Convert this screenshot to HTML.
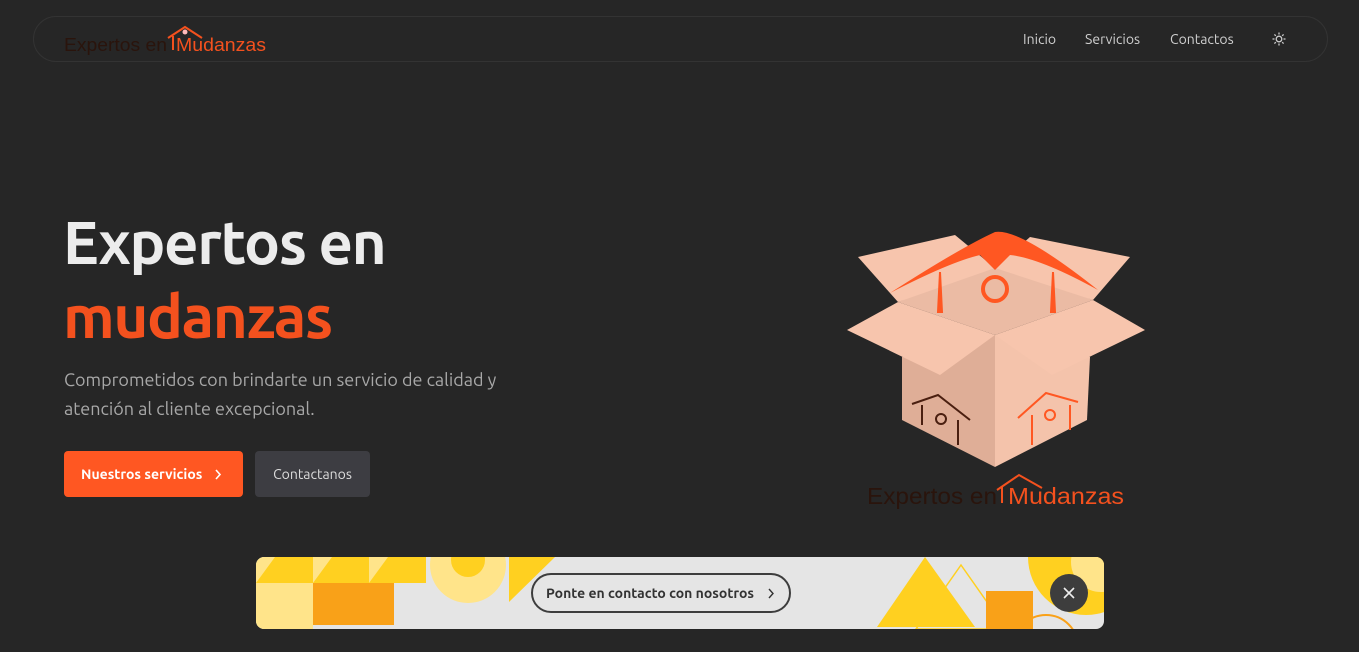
<!DOCTYPE html>
<html><head><meta charset="utf-8"><style>
*{margin:0;padding:0;box-sizing:border-box}
body{width:1359px;height:652px;background:#262626;font-family:"Ubuntu","Liberation Sans","DejaVu Sans",sans-serif;position:relative;overflow:hidden}
.nav{position:absolute;left:33px;top:16px;width:1295px;height:46px;border:1px solid #333;border-radius:23px}
.nav a{position:absolute;top:14px;font-size:14px;color:#cfcfcf;text-decoration:none}
h1{position:absolute;left:63px;top:206px;font-size:60px;font-weight:bold;color:#ececec;line-height:74px;letter-spacing:-1.4px}
h1 span{color:#f4511e}
p{position:absolute;left:64px;top:366px;font-size:18px;line-height:29px;color:#a8a8a8;width:460px}
.b1{position:absolute;left:64px;top:451px;width:179px;height:46px;background:#ff5722;border-radius:4px;color:#fff;font-size:14px;font-weight:bold;line-height:46px;padding-left:17px}
.b2{position:absolute;left:255px;top:451px;width:115px;height:46px;background:#3d3d42;border-radius:4px;color:#ddd;font-size:14px;line-height:46px;text-align:center}
.ban{position:absolute;left:256px;top:557px;width:848px;height:72px;background:#e5e5e5;border-radius:8px;overflow:hidden}
.chev{position:absolute}
</style></head><body>
<div class="nav">
<svg style="position:absolute;left:30px;top:7px" width="240" height="32">
<text x="0" y="27" font-family="Liberation Sans,sans-serif" font-size="18" textLength="103" lengthAdjust="spacingAndGlyphs" fill="#2a140c">Expertos en</text>
<text x="112" y="27" font-family="Liberation Sans,sans-serif" font-size="18" textLength="90" lengthAdjust="spacingAndGlyphs" fill="#f4511e">Mudanzas</text>
<path d="M104 14 L121 3 L138 14" stroke="#f4511e" stroke-width="2" fill="none"/>
<line x1="109" y1="12" x2="109" y2="26" stroke="#f4511e" stroke-width="2"/>
<circle cx="121" cy="8" r="2.5" fill="#fbb"/>
</svg>
<a style="left:989px">Inicio</a><a style="left:1051px">Servicios</a><a style="left:1136px">Contactos</a>
<svg style="position:absolute;left:1238px;top:15px" width="14" height="14" viewBox="0 0 14 14" stroke="#ccc" stroke-width="1.3" fill="none"><circle cx="7" cy="7" r="2.8"/><path d="M7 0.5v2M7 11.5v2M0.5 7h2M11.5 7h2M2.4 2.4l1.4 1.4M10.2 10.2l1.4 1.4M2.4 11.6l1.4-1.4M10.2 3.8l1.4-1.4"/></svg>
</div>
<h1>Expertos en<br><span>mudanzas</span></h1>
<p>Comprometidos con brindarte un servicio de calidad y atención al cliente excepcional.</p>
<div class="b1">Nuestros servicios<svg class="chev" style="left:150px;top:18px" width="8" height="11" viewBox="0 0 8 11"><path d="M2 1l4 4.5L2 10" stroke="#fff" stroke-width="1.6" fill="none"/></svg></div>
<div class="b2">Contactanos</div>
<svg style="position:absolute;left:830px;top:220px" width="330" height="300" viewBox="830 220 330 300">
<polygon points="898,302 995,262 1093,300 995,335" fill="#ebbba4"/>
<polygon points="858,257 955,235 995,268 898,302" fill="#f7c5ad"/>
<polygon points="1030,237 1130,257 1093,300 995,268" fill="#f7c5ad"/>
<polygon points="902,357 995,335 995,467 902,420" fill="#dfae97"/>
<polygon points="995,335 1090,357 1087,420 995,467" fill="#f4c3ab"/>
<polygon points="847,330 898,302 995,335 940,375" fill="#f7c5ad"/>
<polygon points="995,335 1093,300 1145,330 1052,375" fill="#f7c5ad"/>
<path d="M890 293 Q960 248 995 232 Q1020 228 1098 290 Q1040 258 1010 255 L995 270 L980 255 Q950 262 890 293Z" fill="#ff5722"/>
<circle cx="995" cy="289" r="12" stroke="#ff5722" stroke-width="4" fill="none"/>
<path d="M940 272 L938 312 L942 312Z M1053 272 L1051 312 L1055 312Z" stroke="#ff5722" stroke-width="2" fill="#ff5722"/>
<path d="M912 404 L938 395 L970 420" stroke="#4a1f10" stroke-width="2" fill="none"/>
<circle cx="941" cy="419" r="5" stroke="#4a1f10" stroke-width="2" fill="none"/>
<path d="M922 405v20M958 420v25" stroke="#4a1f10" stroke-width="2"/>
<path d="M1018 418 L1046 393 L1078 402" stroke="#ff5722" stroke-width="2" fill="none"/>
<circle cx="1050" cy="415" r="5" stroke="#ff5722" stroke-width="2" fill="none"/>
<path d="M1032 415v30M1070 405v25" stroke="#ff5722" stroke-width="2"/>
<text x="867" y="504" font-family="Liberation Sans,sans-serif" font-size="23" textLength="130" lengthAdjust="spacingAndGlyphs" fill="#2a140c">Expertos en</text>
<text x="1008" y="504" font-family="Liberation Sans,sans-serif" font-size="23" textLength="116" lengthAdjust="spacingAndGlyphs" fill="#f4511e">Mudanzas</text>
<path d="M997 490 L1019 475 L1042 488" stroke="#f4511e" stroke-width="2" fill="none"/>
<line x1="1002" y1="487" x2="1002" y2="503" stroke="#f4511e" stroke-width="2"/>
</svg>
<div class="ban">
<svg width="848" height="72" style="position:absolute;left:0;top:0">
<rect x="0" y="0" width="170" height="26" fill="#ffe48a"/>
<polygon points="0,26 19,0 57,0 57,26" fill="#ffd020"/>
<polygon points="57,26 76,0 113,0 113,26" fill="#ffd020"/>
<polygon points="113,26 132,0 170,0 170,26" fill="#ffd020"/>
<rect x="0" y="26" width="57" height="46" fill="#ffe48a"/>
<rect x="57" y="26" width="81" height="42" fill="#f9a118"/>
<circle cx="212" cy="8" r="38" fill="#ffe48a"/><circle cx="212" cy="3" r="17" fill="#ffd020"/>
<polygon points="253,0 299,0 253,45" fill="#ffd020"/>
<polygon points="669,0 621,70 719,70" fill="#ffd020"/>
<polygon points="705,8 660,72 750,72" fill="none" stroke="#ffd020" stroke-width="1.5"/>
<rect x="730" y="34" width="47" height="38" fill="#f9a118"/>
<circle cx="830" cy="0" r="58" fill="#ffd020"/><circle cx="845" cy="5" r="30" fill="#ffe48a"/>
<circle cx="790" cy="90" r="32" fill="none" stroke="#f9a118" stroke-width="2"/>
</svg>
<div style="position:absolute;left:275px;top:16px;width:260px;height:40px;border:2px solid #3d3d3d;border-radius:20px;font-size:14px;font-weight:bold;color:#333;line-height:36px;padding-left:13px">Ponte en contacto con nosotros<svg class="chev" style="left:234px;top:13px" width="8" height="11" viewBox="0 0 8 11"><path d="M2 1l4 4.5L2 10" stroke="#333" stroke-width="1.4" fill="none"/></svg></div>
<div style="position:absolute;left:794px;top:17px;width:38px;height:38px;border-radius:50%;background:#3d3d3d"><svg style="position:absolute;left:13px;top:13px" width="12" height="12" viewBox="0 0 12 12"><path d="M1 1l10 10M11 1L1 11" stroke="#eee" stroke-width="1.6"/></svg></div>
</div>
</body></html>
